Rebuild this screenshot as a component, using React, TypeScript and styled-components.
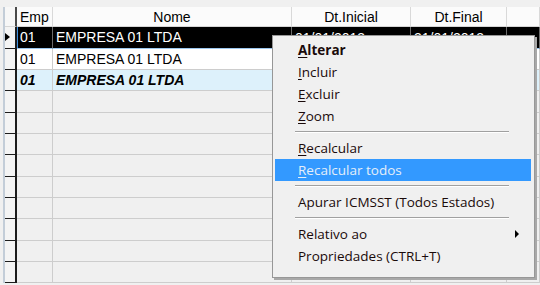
import styled, { createGlobalStyle } from "styled-components";

type RowKind = "selected" | "normal" | "alt" | "empty";

const rows: { kind: RowKind; emp?: string; nome?: string; ini?: string; fim?: string }[] = [
  { kind: "selected", emp: "01", nome: "EMPRESA 01 LTDA", ini: "01/01/2013", fim: "31/01/2013" },
  { kind: "normal", emp: "01", nome: "EMPRESA 01 LTDA" },
  { kind: "alt", emp: "01", nome: "EMPRESA 01 LTDA" },
  ...Array.from({ length: 9 }, () => ({ kind: "empty" as RowKind })),
];

const App = () => {
  return (
    <>
      <GlobalStyle />
      <Screen>
        <Grid>
          <Header>
            <IndicatorHead />
            <HeadCell>Emp</HeadCell>
            <HeadCell $center>Nome</HeadCell>
            <HeadCell $center>Dt.Inicial</HeadCell>
            <HeadCell $center>Dt.Final</HeadCell>
            <HeadCell />
          </Header>
          {rows.map((r, i) => (
            <Row key={i} $kind={r.kind}>
              <Indicator>{r.kind === "selected" && <Pointer />}</Indicator>
              <Cell $kind={r.kind} $focus={r.kind === "selected"}>{r.emp}</Cell>
              <Cell $kind={r.kind}>{r.nome}</Cell>
              <Cell $kind={r.kind} $peek>{r.ini}</Cell>
              <Cell $kind={r.kind} $peek>{r.fim}</Cell>
              <Cell $kind={r.kind} />
            </Row>
          ))}
        </Grid>

        <Menu>
          <MenuItem $bold>
            <u>A</u>lterar
          </MenuItem>
          <MenuItem>
            <u>I</u>ncluir
          </MenuItem>
          <MenuItem>
            <u>E</u>xcluir
          </MenuItem>
          <MenuItem>
            <u>Z</u>oom
          </MenuItem>
          <Separator />
          <MenuItem>
            <u>R</u>ecalcular
          </MenuItem>
          <MenuItem $active>
            <u>R</u>ecalcular todos
          </MenuItem>
          <Separator />
          <MenuItem>Apurar ICMSST (Todos Estados)</MenuItem>
          <Separator />
          <MenuItem>
            Relativo ao
            <SubArrow />
          </MenuItem>
          <MenuItem>Propriedades (CTRL+T)</MenuItem>
        </Menu>
      </Screen>
    </>
  );
};

const GlobalStyle = createGlobalStyle`
  body {
    margin: 0;
    background: #f0f0f0;
    overflow: hidden;
  }
`;

const Screen = styled.div`
  position: relative;
  width: 540px;
  height: 285px;
  overflow: hidden;
  padding: 7px 0 0 3px;
  box-sizing: border-box;
  background: #f0f0f0;
  font-family: "Liberation Sans", Arial, sans-serif;
  font-size: 14px;
`;

const Grid = styled.div`
  display: flex;
  flex-direction: column;
  border-left: 2px solid #c3cdd8;
`;

const columns = "12px 36px 239px 119px 96px 1fr";

const Header = styled.div`
  display: grid;
  grid-template-columns: ${columns};
  height: 20.333px;
`;

const IndicatorHead = styled.div`
  background: #f7f7f7;
  border-right: 2px solid #4a4a4a;
  border-bottom: 1px solid #d6d6d6;
`;

const HeadCell = styled.div<{ $center?: boolean }>`
  background: #fbfbfb;
  border-right: 1px solid #d9d9d9;
  border-bottom: 1px solid #d6d6d6;
  color: #000;
  padding: 0 3px;
  display: flex;
  align-items: center;
  justify-content: ${(p) => (p.$center ? "center" : "flex-start")};
  white-space: nowrap;
`;

const Row = styled.div<{ $kind: RowKind }>`
  display: grid;
  grid-template-columns: ${columns};
  height: 21.333px;
`;

const Indicator = styled.div`
  position: relative;
  background: #f4f4f4;
  border-right: 2px solid #1c1c1c;
  border-bottom: 1px solid #1c1c1c;
`;

const Pointer = styled.span`
  position: absolute;
  left: 0;
  top: 6px;
  width: 0;
  height: 0;
  border-top: 4px solid transparent;
  border-bottom: 4px solid transparent;
  border-left: 5px solid #000;
`;

const bg: Record<RowKind, string> = {
  selected: "#000",
  normal: "#fff",
  alt: "#ddf1fb",
  empty: "#f0f0f0",
};

const Cell = styled.div<{ $kind: RowKind; $focus?: boolean; $peek?: boolean }>`
  background: ${(p) => bg[p.$kind]};
  color: ${(p) => (p.$kind === "selected" ? "#fff" : "#000")};
  font-weight: ${(p) => (p.$kind === "alt" ? 700 : 400)};
  font-style: ${(p) => (p.$kind === "alt" ? "italic" : "normal")};
  border-right: 1px solid ${(p) => (p.$kind === "selected" ? "#6b6b6b" : "#cdcdcd")};
  border-bottom: 1px solid ${(p) => (p.$kind === "selected" ? "#9cc7ee" : "#cdcdcd")};
  box-shadow: ${(p) => (p.$focus ? "inset 1px 0 0 #3d8fe0" : "none")};
  padding: ${(p) => (p.$peek ? "2px 2px 0 3px" : "0 2px 0 3px")};
  display: flex;
  align-items: center;
  white-space: nowrap;
  overflow: hidden;
`;

const Menu = styled.div`
  position: absolute;
  left: 272px;
  top: 35px;
  width: 263px;
  height: 243px;
  box-sizing: border-box;
  padding: 3px 3px 0 2px;
  background: #f0f0f0;
  border: 1px solid #979797;
  box-shadow: 2px 2px 0 #a8a8a8;
  font-family: "Open Sans", "Noto Sans", sans-serif;
  font-size: 13.5px;
  color: #000;
`;

const MenuItem = styled.div<{ $bold?: boolean; $active?: boolean }>`
  position: relative;
  height: 22px;
  display: flex;
  align-items: center;
  padding-left: 23px;
  font-weight: ${(p) => (p.$bold ? 700 : 400)};
  background: ${(p) => (p.$active ? "#3399ff" : "transparent")};
  color: ${(p) => (p.$active ? "#e4eef9" : "#1a0a0a")};
  white-space: nowrap;

  u {
    text-underline-offset: 2px;
  }
`;

const Separator = styled.div`
  height: 10px;
  margin: 0 22px 0 20px;
  display: flex;
  align-items: center;

  &::before {
    content: "";
    flex: 1;
    height: 1px;
    background: #a0a0a0;
    border-bottom: 1px solid #ffffff;
  }
`;

const SubArrow = styled.span`
  position: absolute;
  right: 12px;
  top: 7px;
  width: 0;
  height: 0;
  border-top: 4px solid transparent;
  border-bottom: 4px solid transparent;
  border-left: 4px solid #000;
`;

export default App;
